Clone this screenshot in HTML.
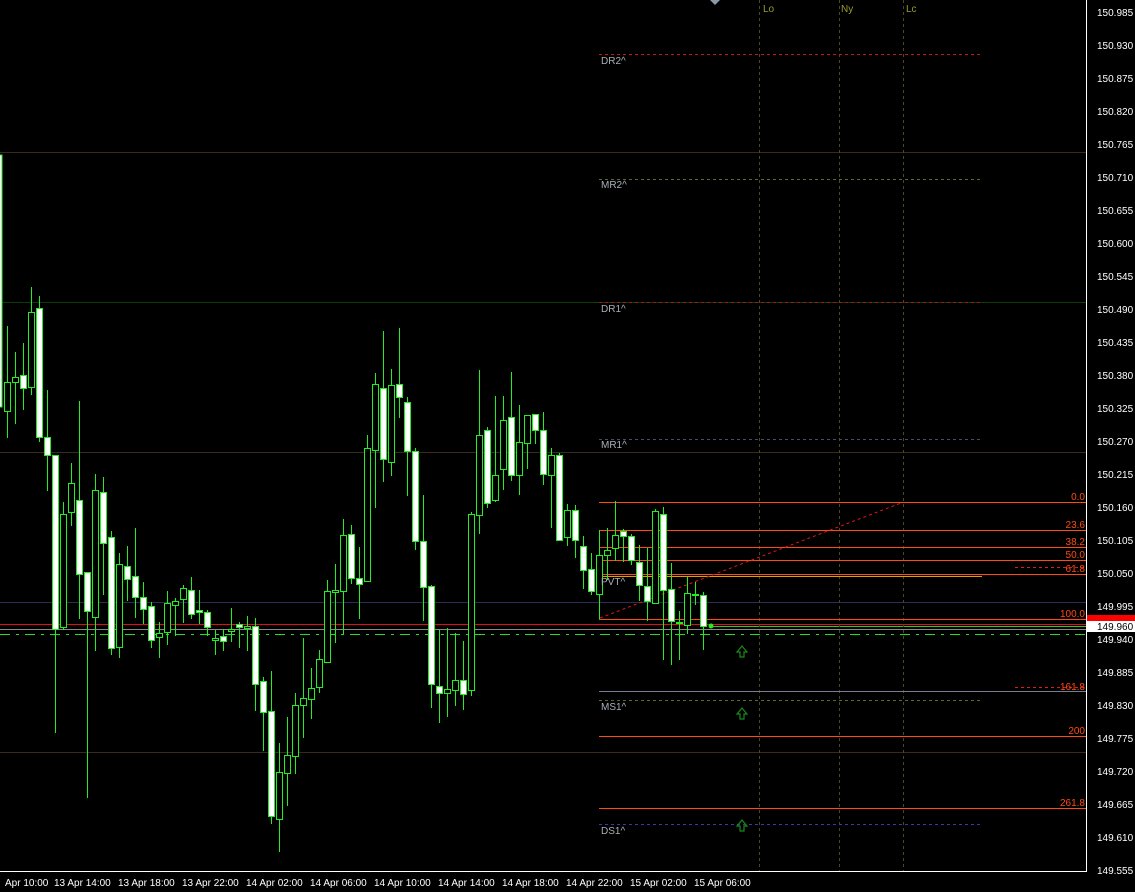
<!DOCTYPE html>
<html><head><meta charset="utf-8"><style>
html,body{margin:0;padding:0;background:#000;width:1135px;height:892px;overflow:hidden}
svg{display:block}
text{font-family:"Liberation Sans",sans-serif;font-size:10px}
</style></head><body>
<svg id="s" width="1135" height="892" viewBox="0 0 1135 892" xmlns="http://www.w3.org/2000/svg">
<rect width="1135" height="892" fill="#000"/>
<line x1="0" y1="152.5" x2="1087" y2="152.5" stroke="#3a2a1c"/>
<line x1="0" y1="302.5" x2="1087" y2="302.5" stroke="#0c3c0c"/>
<line x1="0" y1="452.5" x2="1087" y2="452.5" stroke="#3a2a1c"/>
<line x1="0" y1="752.5" x2="1087" y2="752.5" stroke="#3a2a1c"/>
<line x1="0" y1="602.5" x2="1087" y2="602.5" stroke="#2c2a58"/>
<line x1="0" y1="624.5" x2="1087" y2="624.5" stroke="#e01010"/>
<line x1="0" y1="629.5" x2="1087" y2="629.5" stroke="#8a8a8a"/>
<line x1="0" y1="634.5" x2="1087" y2="634.5" stroke="#22dd22" stroke-dasharray="10,6,3,6"/>
<line x1="711" y1="626.5" x2="1087" y2="626.5" stroke="#22cc22"/>
<g stroke="#4a4a22" stroke-dasharray="3,3">
<line x1="759.5" y1="0" x2="759.5" y2="871"/>
<line x1="839.5" y1="0" x2="839.5" y2="871"/>
<line x1="903.5" y1="0" x2="903.5" y2="871"/>
</g>
<g fill="#9a9a30"><text x="763" y="12">Lo</text><text x="841" y="12">Ny</text><text x="906" y="12">Lc</text></g>
<polygon points="710,0 720,0 715,5" fill="#8a9aa8"/>
<g stroke-dasharray="3,3">
<line x1="599" y1="54.5" x2="980" y2="54.5" stroke="#c01818"/>
<line x1="599" y1="179.5" x2="980" y2="179.5" stroke="#5a6a28"/>
<line x1="599" y1="302.5" x2="980" y2="302.5" stroke="#a01818"/>
<line x1="599" y1="439.5" x2="980" y2="439.5" stroke="#4a4a6a"/>
<line x1="599" y1="700.5" x2="980" y2="700.5" stroke="#5a6a28"/>
<line x1="599" y1="824.5" x2="980" y2="824.5" stroke="#3a3aa0"/>
</g>
<g fill="#a8b0b8"><text x="601" y="64">DR2^</text><text x="601" y="188">MR2^</text><text x="601" y="312">DR1^</text><text x="601" y="448">MR1^</text><text x="601" y="710">MS1^</text><text x="601" y="834">DS1^</text></g>
<g stroke="#ff4a10">
<line x1="599" y1="502.5" x2="1087" y2="502.5"/>
<line x1="599" y1="530.5" x2="1087" y2="530.5"/>
<line x1="599" y1="547.5" x2="1087" y2="547.5"/>
<line x1="599" y1="560.5" x2="1087" y2="560.5"/>
<line x1="599" y1="574.5" x2="1087" y2="574.5"/>
<line x1="599" y1="619.5" x2="1087" y2="619.5"/>
<line x1="599" y1="736.5" x2="1087" y2="736.5"/>
<line x1="599" y1="808.5" x2="1087" y2="808.5"/>
</g>
<line x1="599" y1="691.5" x2="1087" y2="691.5" stroke="#7a7a90"/>
<line x1="599" y1="576.5" x2="982" y2="576.5" stroke="#e0a000"/>
<line x1="599.5" y1="530" x2="599.5" y2="620" stroke="#777"/>
<g stroke="#e01818" stroke-dasharray="3,3">
<line x1="1015" y1="567.5" x2="1085" y2="567.5"/>
<line x1="1015" y1="687.5" x2="1085" y2="687.5"/>
<line x1="600" y1="618" x2="901" y2="503"/>
</g>
<g fill="#ff4a10" text-anchor="end"><text x="1085" y="500">0.0</text><text x="1085" y="528">23.6</text><text x="1085" y="545">38.2</text><text x="1085" y="558">50.0</text><text x="1085" y="572">61.8</text><text x="1085" y="617">100.0</text><text x="1085" y="690">161.8</text><text x="1085" y="734">200</text><text x="1085" y="806">261.8</text></g>
<g fill="none" stroke="#1a8a1a" stroke-width="1.2">
<path d="M742,646 L737,652 L740,652 L740,657 L744,657 L744,652 L747,652 Z"/>
<path d="M742,708 L737,714 L740,714 L740,719 L744,719 L744,714 L747,714 Z"/>
<path d="M742,820 L737,826 L740,826 L740,831 L744,831 L744,826 L747,826 Z"/>
</g>
<g id="c"></g>
<text x="601" y="585" fill="#a8b0b8">PVT^</text>
<circle cx="711" cy="626" r="2.5" fill="#22ee22"/>
<line x1="1086.5" y1="0" x2="1086.5" y2="872" stroke="#fff"/>
<line x1="0" y1="871.5" x2="1087" y2="871.5" stroke="#fff"/>
<g fill="#fff">
<text x="1097" y="16">150.985</text><text x="1097" y="49">150.930</text><text x="1097" y="82">150.875</text><text x="1097" y="115">150.820</text><text x="1097" y="148">150.765</text><text x="1097" y="181">150.710</text><text x="1097" y="214">150.655</text><text x="1097" y="247">150.600</text><text x="1097" y="280">150.545</text><text x="1097" y="313">150.490</text><text x="1097" y="346">150.435</text><text x="1097" y="379">150.380</text><text x="1097" y="412">150.325</text><text x="1097" y="445">150.270</text><text x="1097" y="478">150.215</text><text x="1097" y="511">150.160</text><text x="1097" y="544">150.105</text><text x="1097" y="577">150.050</text><text x="1097" y="610">149.995</text><text x="1097" y="643">149.940</text><text x="1097" y="676">149.885</text><text x="1097" y="709">149.830</text><text x="1097" y="742">149.775</text><text x="1097" y="775">149.720</text><text x="1097" y="808">149.665</text><text x="1097" y="841">149.610</text><text x="1097" y="874">149.555</text>
</g>
<rect x="1087" y="615" width="48" height="7" fill="#ff0000"/>
<rect x="1087" y="621" width="48" height="11" fill="#fff"/>
<text x="1097" y="630" fill="#000">149.960</text>
<g fill="#fff">
<text x="5" y="886">Apr 10:00</text><text x="54" y="886">13 Apr 14:00</text><text x="118" y="886">13 Apr 18:00</text><text x="182" y="886">13 Apr 22:00</text><text x="246" y="886">14 Apr 02:00</text><text x="310" y="886">14 Apr 06:00</text><text x="374" y="886">14 Apr 10:00</text><text x="438" y="886">14 Apr 14:00</text><text x="502" y="886">14 Apr 18:00</text><text x="566" y="886">14 Apr 22:00</text><text x="630" y="886">15 Apr 02:00</text><text x="694" y="886">15 Apr 06:00</text>
</g>
</svg>
<script>
var d=[[326,382,411,438,0],[352,377,382,424,0],[343,375,388,410,1],[287,312,387,395,0],[296,308,437,442,1],[390,437,455,491,1],[455,455,629,733,1],[502,514,627,630,0],[463,483,512,526,0],[401,500,574,619,1],[572,572,611,798,1],[474,490,617,651,0],[477,492,543,595,1],[531,537,648,655,1],[553,564,647,658,0],[546,566,579,601,1],[528,576,597,618,1],[582,597,609,624,1],[602,606,640,648,1],[622,633,637,658,0],[591,603,632,645,0],[598,601,605,636,0],[585,588,599,623,0],[577,590,614,619,1],[590,610,612,624,1],[610,612,627,636,1],[630,638,640,655,0],[629,636,641,651,1],[608,629,631,642,0],[622,624,627,648,1],[616,626,628,651,0],[618,626,684,711,1],[677,681,712,751,1],[671,711,816,824,1],[743,772,819,852,0],[717,755,773,806,0],[693,705,756,774,0],[638,698,705,738,0],[668,688,699,719,0],[650,659,687,693,0],[580,591,662,662,0],[564,590,592,643,0],[519,535,591,634,0],[525,534,578,584,1],[547,578,584,619,1],[435,448,581,581,0],[373,384,450,508,0],[331,388,459,482,1],[369,385,462,476,0],[328,384,397,418,1],[397,402,451,496,1],[448,451,541,550,1],[495,541,587,621,1],[585,586,684,708,1],[630,686,693,723,1],[628,689,693,717,0],[633,680,690,706,0],[641,680,694,710,1],[512,514,690,696,0],[370,435,515,534,0],[427,430,503,508,1],[396,475,500,502,0],[396,420,469,490,0],[372,417,475,481,1],[405,442,475,495,0],[415,415,443,469,0],[414,414,430,444,1],[412,430,474,485,1],[448,455,475,528,0],[453,455,540,540,1],[504,510,537,546,0],[505,510,540,558,1],[536,546,570,589,1],[553,569,591,595,1],[530,555,594,619,0],[528,550,555,580,0],[501,535,548,561,0],[529,531,536,562,1],[534,536,560,565,1],[545,562,585,601,1],[548,586,601,621,1],[509,511,603,603,0],[507,514,590,660,1],[563,589,621,665,1],[611,622,623,660,0],[577,593,625,634,0],[582,594,595,605,1],[592,595,626,650,1]];
var s='<rect x="-3" y="155" width="5" height="252" fill="#fff" stroke="#22ee22"/>';
for(var i=0;i<d.length;i++){var c=d[i],x=7+8*i,hi=c[0],t=c[1],b=c[2],lo=c[3];
 s+='<line x1="'+(x+.5)+'" y1="'+hi+'" x2="'+(x+.5)+'" y2="'+lo+'" stroke="#22ee22"/>';
 if(b-t<2){s+='<rect x="'+(x-3)+'" y="'+t+'" width="7" height="2" fill="#22ee22"/>';}
 else s+='<rect x="'+(x-2.5)+'" y="'+(t+.5)+'" width="6" height="'+(b-t)+'" fill="'+(c[4]?'#fff':'#000')+'" stroke="#22ee22"/>';}
document.getElementById('c').innerHTML=s;
</script>
</body></html>
